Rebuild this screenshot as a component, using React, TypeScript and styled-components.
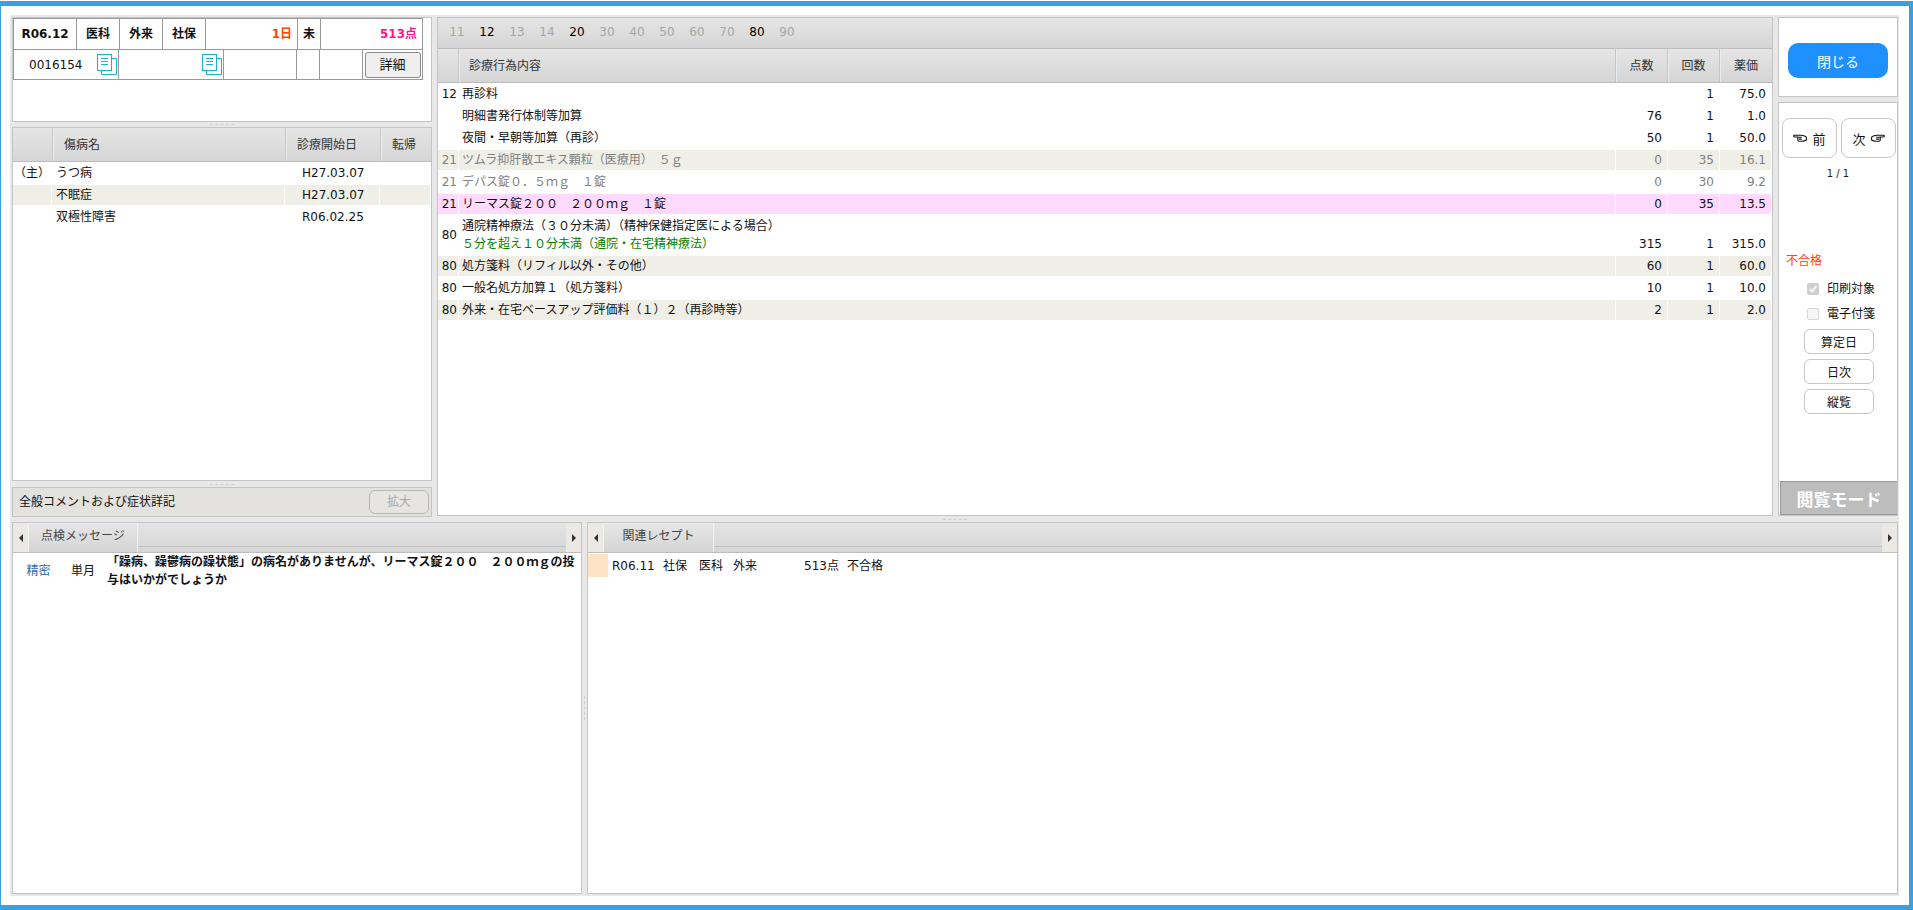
import styled, { createGlobalStyle } from "styled-components"

const GlobalStyle = createGlobalStyle`
  html, body {
    margin: 0;
    padding: 0;
    background: #fff;
    overflow: hidden;
  }
  * {
    box-sizing: border-box;
  }
  body {
    font-family: "DejaVu Sans", "Noto Sans CJK JP", sans-serif;
    font-size: 12px;
    color: #111;
  }
`

const headGradient = "linear-gradient(#e5e5e5, #d5d5d5)"
const panelLine = "#c4c4c4"

type Tone = "plain" | "alt" | "pink"

type ProcItem = {
  code: string
  name: string
  sub?: string
  point: string
  count: string
  price: string
  tone: Tone
  muted?: boolean
}

const tabCodes = [
  { code: "11" },
  { code: "12", on: true },
  { code: "13" },
  { code: "14" },
  { code: "20", on: true },
  { code: "30" },
  { code: "40" },
  { code: "50" },
  { code: "60" },
  { code: "70" },
  { code: "80", on: true },
  { code: "90" },
]

const procItems: ProcItem[] = [
  { code: "12", name: "再診料", point: "", count: "1", price: "75.0", tone: "plain" },
  { code: "", name: "明細書発行体制等加算", point: "76", count: "1", price: "1.0", tone: "plain" },
  { code: "", name: "夜間・早朝等加算（再診）", point: "50", count: "1", price: "50.0", tone: "plain" },
  { code: "21", name: "ツムラ抑肝散エキス顆粒（医療用）　５ｇ", point: "0", count: "35", price: "16.1", tone: "alt", muted: true },
  { code: "21", name: "デパス錠０．５ｍｇ　１錠", point: "0", count: "30", price: "9.2", tone: "plain", muted: true },
  { code: "21", name: "リーマス錠２００　２００ｍｇ　１錠", point: "0", count: "35", price: "13.5", tone: "pink" },
  {
    code: "80",
    name: "通院精神療法（３０分未満）（精神保健指定医による場合）",
    sub: "５分を超え１０分未満（通院・在宅精神療法）",
    point: "315",
    count: "1",
    price: "315.0",
    tone: "plain",
  },
  { code: "80", name: "処方箋料（リフィル以外・その他）", point: "60", count: "1", price: "60.0", tone: "alt" },
  { code: "80", name: "一般名処方加算１（処方箋料）", point: "10", count: "1", price: "10.0", tone: "plain" },
  { code: "80", name: "外来・在宅ベースアップ評価料（１）２（再診時等）", point: "2", count: "1", price: "2.0", tone: "alt" },
]

const diseases = [
  { main: "（主）", name: "うつ病", start: "H27.03.07", tone: "plain" as Tone },
  { main: "", name: "不眠症", start: "H27.03.07", tone: "alt" as Tone },
  { main: "", name: "双極性障害", start: "R06.02.25", tone: "plain" as Tone },
]

function DocIcon() {
  return (
    <svg width="20" height="21" viewBox="0 0 20 21" fill="none" stroke="#17b4cf" strokeWidth="1">
      <path d="M14.5 4.5h5v16h-15v-4" />
      <rect x="0.5" y="0.5" width="14" height="16" fill="#fff" />
      <path d="M4 4.5h7M4 7.5h7M4 10.5h7" />
    </svg>
  )
}

function HandIcon({ flip }: { flip?: boolean }) {
  return (
    <svg
      width="14"
      height="8"
      viewBox="0 0 14 8"
      fill="#fff"
      stroke="#111"
      strokeWidth="1.1"
      transform={flip ? "scale(-1 1)" : undefined}
    >
      <path d="M0.6 3.2C2 2 3.8 1.4 6 1.3h6.6c1 0 1 1.7 0 1.7H9.2v3c0 .8-.5 1.2-1.2 1.2H5C3.2 7.2 1.8 6.8 0.6 6z" />
      <path d="M5.2 3.2h3.6M5.2 5.1h3" />
    </svg>
  )
}

function App() {
  return (
    <Page>
      <GlobalStyle />
      <Frame>
        <TopRow>
          <LeftColumn>
            <InfoPanel>
              <InfoTable>
                <InfoRow $cols="63px 43px 43px 43px 92px 23px 1fr" $height={31}>
                  <InfoCell $bold>R06.12</InfoCell>
                  <InfoCell $bold>医科</InfoCell>
                  <InfoCell $bold>外来</InfoCell>
                  <InfoCell $bold>社保</InfoCell>
                  <InfoCell $bold $end $color="#ff4500">1日</InfoCell>
                  <InfoCell $bold>未</InfoCell>
                  <InfoCell $bold $end $color="#ff1493">513点</InfoCell>
                </InfoRow>
                <InfoRow $cols="105px 105px 73px 23px 43px 1fr" $height={30}>
                  <IdCell>
                    <span>0016154</span>
                    <DocIcon />
                  </IdCell>
                  <IdCell>
                    <span />
                    <DocIcon />
                  </IdCell>
                  <InfoCell />
                  <InfoCell />
                  <InfoCell />
                  <InfoCell>
                    <DetailButton>詳細</DetailButton>
                  </InfoCell>
                </InfoRow>
              </InfoTable>
            </InfoPanel>
            <RowGrip $height={5} />
            <DiseasePanel>
              <DiseaseHead>
                <HeadCell />
                <HeadCell $line $pad={11}>傷病名</HeadCell>
                <HeadCell $line $pad={11}>診療開始日</HeadCell>
                <HeadCell $line $pad={11}>転帰</HeadCell>
              </DiseaseHead>
              {diseases.map((d) => (
                <DiseaseRow key={d.name}>
                  <DataCell $tone={d.tone} $center>{d.main}</DataCell>
                  <DataCell $tone={d.tone} $pad={4}>{d.name}</DataCell>
                  <DataCell $tone={d.tone} $pad={17}>{d.start}</DataCell>
                  <DataCell $tone={d.tone} />
                </DiseaseRow>
              ))}
            </DiseasePanel>
            <RowGrip $height={6} />
            <CommentBar>
              <span>全般コメントおよび症状詳記</span>
              <ZoomButton disabled>拡大</ZoomButton>
            </CommentBar>
          </LeftColumn>

          <MainPanel>
            <CodeTabs>
              {tabCodes.map((t) => (
                <CodeTab key={t.code} $on={t.on}>{t.code}</CodeTab>
              ))}
            </CodeTabs>
            <ProcHead>
              <HeadCell />
              <HeadCell $line $pad={10}>診療行為内容</HeadCell>
              <HeadCell $line $center>点数</HeadCell>
              <HeadCell $line $center>回数</HeadCell>
              <HeadCell $line $center>薬価</HeadCell>
            </ProcHead>
            <ProcList>
              {procItems.map((p) => (
                <ProcRow key={p.name} $muted={p.muted} $tall={!!p.sub}>
                  <DataCell $tone={p.tone} $right>{p.code}</DataCell>
                  <NameCell $tone={p.tone}>
                    <div>{p.name}</div>
                    {p.sub && <SubName>{p.sub}</SubName>}
                  </NameCell>
                  <ValueCell $tone={p.tone} $low={!!p.sub}>{p.point}</ValueCell>
                  <ValueCell $tone={p.tone} $low={!!p.sub}>{p.count}</ValueCell>
                  <ValueCell $tone={p.tone} $low={!!p.sub}>{p.price}</ValueCell>
                </ProcRow>
              ))}
            </ProcList>
          </MainPanel>

          <RightColumn>
            <ClosePanel>
              <CloseButton>閉じる</CloseButton>
            </ClosePanel>
            <NavPanel>
              <NavButtons>
                <NavButton><HandIcon flip />前</NavButton>
                <NavButton>次<HandIcon /></NavButton>
              </NavButtons>
              <PageCount>1 / 1</PageCount>
              <ResultLabel>不合格</ResultLabel>
              <CheckList>
                <CheckRow>
                  <CheckBox $checked>
                    <svg width="10" height="10" viewBox="0 0 10 10" fill="none" stroke="#f4f4f4" strokeWidth="2">
                      <path d="M1.5 5l2.5 2.5 4.5-5.5" />
                    </svg>
                  </CheckBox>
                  印刷対象
                </CheckRow>
                <CheckRow>
                  <CheckBox />
                  電子付箋
                </CheckRow>
              </CheckList>
              <SideButtons>
                <SideButton>算定日</SideButton>
                <SideButton>日次</SideButton>
                <SideButton>縦覧</SideButton>
              </SideButtons>
              <ModeBadge>閲覧モード</ModeBadge>
            </NavPanel>
          </RightColumn>
        </TopRow>

        <RowGrip $height={5} />

        <BottomRow>
          <TabPanel $width="570px">
            <TabStrip>
              <ArrowBox $dir="left" />
              <Tab $width={110}>点検メッセージ</Tab>
              <TabFill />
              <ArrowBox $dir="right" />
            </TabStrip>
            <MessageRow>
              <MessageKind>精密</MessageKind>
              <MessageSpan>単月</MessageSpan>
              <MessageText>
                「躁病、躁鬱病の躁状態」の病名がありませんが、リーマス錠２００　２００ｍｇの投与はいかがでしょうか
              </MessageText>
            </MessageRow>
          </TabPanel>
          <ColGrip />
          <TabPanel $width="auto">
            <TabStrip>
              <ArrowBox $dir="left" />
              <Tab $width={111}>関連レセプト</Tab>
              <TabFill />
              <ArrowBox $dir="right" />
            </TabStrip>
            <ReceiptRow>
              <ReceiptMark />
              <ReceiptMonth>R06.11</ReceiptMonth>
              <span>社保</span>
              <span>医科</span>
              <span>外来</span>
              <span>513点</span>
              <span>不合格</span>
            </ReceiptRow>
          </TabPanel>
        </BottomRow>
      </Frame>
    </Page>
  )
}

const Page = styled.div`
  width: 1913px;
  height: 909px;
  margin-top: 1px;
  background: #fff;
  border-style: solid;
  border-color: #3c9fe2;
  border-width: 5px 4px 5px 1px;
  padding: 9px 10px 9px 9px;
`

const Frame = styled.div`
  width: 100%;
  height: 100%;
  background: #e8e8e8;
  padding: 2px 1px 2px 2px;
  display: flex;
  flex-direction: column;
`

const TopRow = styled.div`
  display: flex;
  height: 500px;
  gap: 5px;
`

const BottomRow = styled.div`
  flex: 1;
  min-height: 0;
  display: flex;
`

const LeftColumn = styled.div`
  width: 420px;
  display: flex;
  flex-direction: column;
`

const RowGrip = styled.div<{ $height: number }>`
  height: ${({ $height }) => $height}px;
  flex: none;
  display: flex;
  align-items: center;
  justify-content: center;

  &::before {
    content: "";
    width: 24px;
    border-top: 1px dashed #cfcfcf;
  }
`

const ColGrip = styled.div`
  width: 5px;
  flex: none;
  display: flex;
  align-items: center;
  justify-content: center;

  &::before {
    content: "";
    height: 24px;
    border-left: 1px dashed #cfcfcf;
  }
`

const Panel = styled.div`
  background: #fff;
  border: 1px solid ${panelLine};
`

const InfoPanel = styled(Panel)`
  height: 105px;
  flex: none;
`

const InfoTable = styled.div`
  width: 410px;
  border-top: 1px solid #999;
  border-left: 1px solid #999;
`

const InfoRow = styled.div<{ $cols: string; $height: number }>`
  display: grid;
  grid-template-columns: ${({ $cols }) => $cols};
  height: ${({ $height }) => $height}px;
`

const InfoCell = styled.div<{ $bold?: boolean; $end?: boolean; $color?: string }>`
  display: flex;
  align-items: center;
  justify-content: ${({ $end }) => ($end ? "flex-end" : "center")};
  padding: ${({ $end }) => ($end ? "0 5px 0 0" : "0")};
  border-right: 1px solid #999;
  border-bottom: 1px solid #999;
  line-height: 18px;
  font-weight: ${({ $bold }) => ($bold ? 700 : 400)};
  color: ${({ $color }) => $color ?? "#111"};
`

const IdCell = styled(InfoCell)`
  justify-content: space-between;
  padding: 0 1px 0 15px;
`

const DetailButton = styled.button`
  width: 56px;
  height: 26px;
  padding: 0;
  background: #efefef;
  border: 1px solid #8a8a8a;
  border-radius: 3px;
  font: inherit;
  font-size: 13px;
  color: #111;
`

const DiseasePanel = styled(Panel)`
  height: 354px;
  flex: none;
`

const DiseaseHead = styled.div`
  display: grid;
  grid-template-columns: 39px 1fr 95px 51px;
  height: 34px;
  background: ${headGradient};
  border-bottom: 1px solid #bdbdbd;
`

const HeadCell = styled.div<{ $line?: boolean; $center?: boolean; $pad?: number }>`
  display: flex;
  align-items: center;
  justify-content: ${({ $center }) => ($center ? "center" : "flex-start")};
  padding-left: ${({ $pad }) => $pad ?? 0}px;
  border-left: ${({ $line }) => ($line ? "1px solid #c6c6c6" : "none")};
  box-shadow: ${({ $line }) => ($line ? "inset 1px 0 0 #ececec" : "none")};
  line-height: 18px;
  color: #333;
`

const DiseaseRow = styled.div`
  display: grid;
  grid-template-columns: 38px 1fr 94px 50px;
  column-gap: 1px;
  height: 22px;
  padding: 1px 1px 1px 0;
`

const toneColor = (tone?: Tone) => {
  if (tone === "alt") return "#efefe7"
  if (tone === "pink") return "#ffd9ff"
  return "transparent"
}

const DataCell = styled.div<{ $tone?: Tone; $center?: boolean; $right?: boolean; $pad?: number }>`
  display: flex;
  align-items: center;
  justify-content: ${({ $center, $right }) => ($center ? "center" : $right ? "flex-end" : "flex-start")};
  padding-left: ${({ $pad }) => $pad ?? 0}px;
  padding-right: ${({ $right }) => ($right ? 1 : 0)}px;
  background: ${({ $tone }) => toneColor($tone)};
  line-height: 18px;
  white-space: nowrap;
`

const CommentBar = styled.div`
  height: 30px;
  flex: none;
  display: flex;
  align-items: center;
  justify-content: space-between;
  padding: 0 2px 0 6px;
  background: #e3e2de;
  border: 1px solid ${panelLine};
  line-height: 18px;
`

const ZoomButton = styled.button`
  width: 60px;
  height: 24px;
  padding: 0;
  background: #e6e5e1;
  border: 1px solid #b8b8b8;
  border-radius: 6px;
  font: inherit;
  color: #aaa;
`

const MainPanel = styled(Panel)`
  width: 1336px;
  height: 499px;
  display: flex;
  flex-direction: column;
`

const CodeTabs = styled.div`
  display: flex;
  height: 31px;
  flex: none;
  padding: 0 0 2px 4px;
  align-items: center;
  background: ${headGradient};
  border-bottom: 1px solid #bdbdbd;
`

const CodeTab = styled.div<{ $on?: boolean }>`
  width: 30px;
  text-align: center;
  color: ${({ $on }) => ($on ? "#000" : "#a6a6a6")};
`

const ProcHead = styled.div`
  display: grid;
  grid-template-columns: 20px 1fr 52px 52px 53px;
  height: 34px;
  flex: none;
  background: ${headGradient};
  border-bottom: 1px solid #bdbdbd;
`

const ProcList = styled.div`
  flex: 1;
  background: #fff;
`

const ProcRow = styled.div<{ $muted?: boolean; $tall?: boolean }>`
  display: grid;
  grid-template-columns: 20px 1fr 51px 51px 51px;
  column-gap: 1px;
  height: ${({ $tall }) => ($tall ? 40 : 22)}px;
  padding: 1px 1px 1px 0;
  color: ${({ $muted }) => ($muted ? "#808080" : "#111")};
`

const NameCell = styled.div<{ $tone: Tone }>`
  display: flex;
  flex-direction: column;
  justify-content: center;
  padding-left: 3px;
  line-height: 18px;
  background: ${({ $tone }) => toneColor($tone)};
`

const SubName = styled.div`
  color: #008000;
`

const ValueCell = styled.div<{ $tone: Tone; $low?: boolean }>`
  display: flex;
  align-items: ${({ $low }) => ($low ? "flex-end" : "center")};
  justify-content: flex-end;
  padding: 0 5px ${({ $low }) => ($low ? 1 : 0)}px 0;
  line-height: 18px;
  background: ${({ $tone }) => toneColor($tone)};
`

const RightColumn = styled.div`
  width: 120px;
  display: flex;
  flex-direction: column;
  gap: 5px;
  height: 499px;
`

const ClosePanel = styled(Panel)`
  height: 80px;
  flex: none;
  display: flex;
  justify-content: center;
  padding-top: 25px;
`

const CloseButton = styled.button`
  width: 100px;
  height: 35px;
  padding: 0;
  background: #1e90ff;
  border: none;
  border-radius: 10px;
  font: inherit;
  font-size: 14px;
  color: #fff;
`

const NavPanel = styled(Panel)`
  flex: 1;
  display: flex;
  flex-direction: column;
  padding-top: 15px;
`

const NavButtons = styled.div`
  display: flex;
  gap: 4px;
  padding-left: 3px;
`

const NavButton = styled.button`
  width: 55px;
  height: 40px;
  padding: 0;
  display: flex;
  align-items: center;
  justify-content: center;
  gap: 5px;
  background: #fff;
  border: 1px solid #c8c8c8;
  border-radius: 8px;
  font: inherit;
  font-size: 13px;
  color: #111;
`

const PageCount = styled.div`
  margin-top: 10px;
  height: 12px;
  line-height: 12px;
  text-align: center;
  font-size: 10px;
  color: #222;
`

const ResultLabel = styled.div`
  margin-top: 73px;
  padding-left: 7px;
  line-height: 16px;
  color: #ff4500;
`

const CheckList = styled.div`
  margin-top: 7px;
`

const CheckRow = styled.div`
  height: 25px;
  display: flex;
  align-items: center;
  gap: 8px;
  padding-left: 28px;
  line-height: 18px;
`

const CheckBox = styled.div<{ $checked?: boolean }>`
  width: 12px;
  height: 12px;
  display: flex;
  align-items: center;
  justify-content: center;
  background: ${({ $checked }) => ($checked ? "#cfcfcf" : "#f6f6f6")};
  border: 1px solid ${({ $checked }) => ($checked ? "#cfcfcf" : "#d6d6d6")};
  border-radius: 2px;
`

const SideButtons = styled.div`
  display: flex;
  flex-direction: column;
  align-items: center;
  gap: 5px;
  margin-top: 3px;
  padding-left: 2px;
`

const SideButton = styled.button`
  width: 70px;
  height: 25px;
  padding: 0;
  background: #fff;
  border: 1px solid #c8c8c8;
  border-radius: 6px;
  font: inherit;
  color: #111;
`

const ModeBadge = styled.div`
  margin: auto 0 0 1px;
  height: 34px;
  display: flex;
  align-items: center;
  justify-content: center;
  background: #bdbdbd;
  border: 1px solid #999;
  border-right: none;
  font-size: 17px;
  font-weight: 700;
  color: #fff;
`

const TabPanel = styled(Panel)<{ $width: string }>`
  width: ${({ $width }) => $width};
  flex: ${({ $width }) => ($width === "auto" ? 1 : "none")};
  display: flex;
  flex-direction: column;
`

const TabStrip = styled.div`
  display: flex;
  height: 30px;
  flex: none;
  background: ${headGradient};
  border-bottom: 1px solid #bdbdbd;
`

const ArrowBox = styled.div<{ $dir: "left" | "right" }>`
  width: 15px;
  flex: none;
  display: flex;
  align-items: center;
  justify-content: center;
  background: #ece9e4;

  &::before {
    content: "";
    border-style: solid;
    border-color: transparent;
    border-width: 4px 0;
    ${({ $dir }) =>
      $dir === "left" ? "border-right: 4px solid #333;" : "border-left: 4px solid #333;"}
  }
`

const Tab = styled.div<{ $width: number }>`
  width: ${({ $width }) => $width}px;
  flex: none;
  padding: 1px 0 6px;
  display: flex;
  align-items: center;
  justify-content: center;
  background: ${headGradient};
  border: 1px solid #f2f2f2;
  border-bottom: none;
  line-height: 18px;
  color: #444;
`

const TabFill = styled.div`
  flex: 1;
  height: 24px;
  border-bottom: 1px solid #c4c4c4;
`

const MessageRow = styled.div`
  display: grid;
  grid-template-columns: 58px 36px 470px;
  align-items: center;
`

const MessageSpan = styled.span`
  line-height: 18px;
  margin-bottom: 1px;
`

const MessageKind = styled(MessageSpan)`
  padding-right: 7px;
  text-align: center;
  color: #1f6bb0;
`

const MessageText = styled.div`
  font-weight: 700;
  line-height: 18px;
  line-break: strict;
`

const ReceiptRow = styled.div`
  display: grid;
  grid-template-columns: 20px 55px 36px 34px 71px 43px 1fr;
  align-items: center;
  height: 23px;
  margin-top: 1px;
  line-height: 18px;
`

const ReceiptMark = styled.div`
  height: 100%;
  background: #fde2c4;
`

const ReceiptMonth = styled.span`
  margin-left: 4px;
`

export default App
